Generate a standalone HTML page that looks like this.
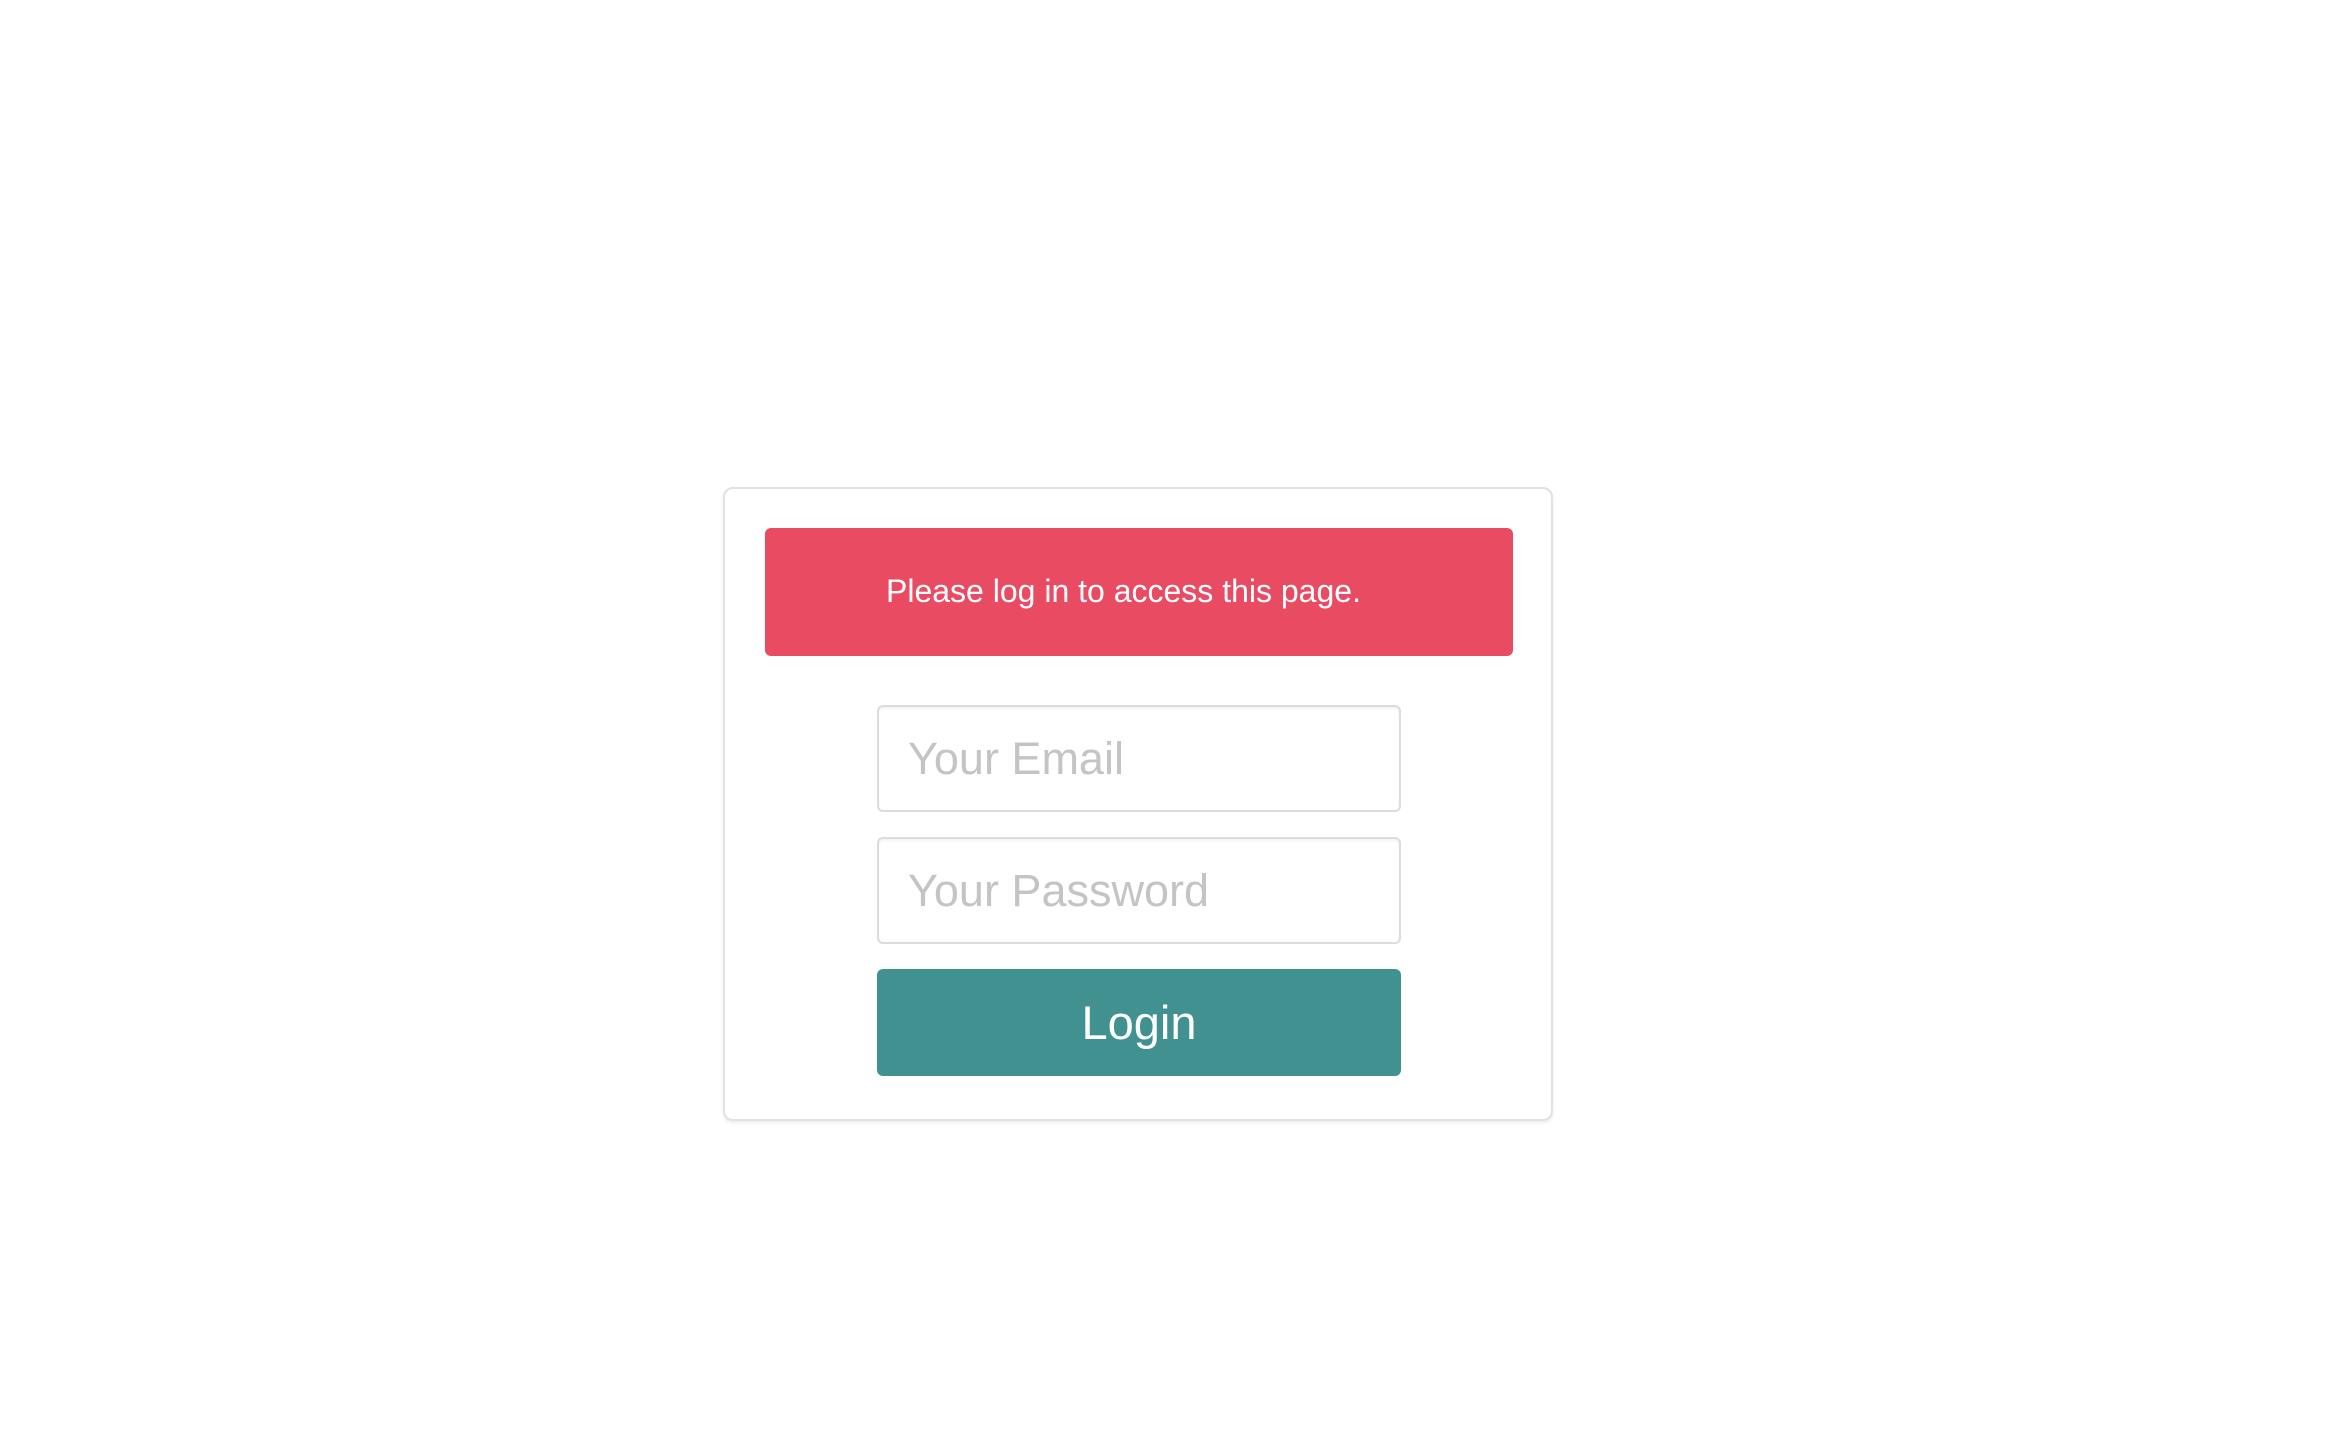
<!DOCTYPE html>
<html><head><meta charset="utf-8"><style>
html,body{margin:0;padding:0;background:#fff;width:2346px;height:1456px;overflow:hidden;font-family:"Liberation Sans",Arial,sans-serif}
.card{position:absolute;left:723px;top:487px;width:826px;height:630px;border:2px solid #e2e2e2;border-radius:10px;box-shadow:0 2px 3px rgba(0,0,0,.08);background:#fff}
.alert{position:absolute;left:765px;top:528px;width:748px;height:128px;background:#e94b63;border-radius:6px}
.alert span{position:absolute;left:121px;top:0;line-height:126px;font-size:32px;color:#fff;white-space:nowrap}
.inp{position:absolute;left:877px;width:520px;height:103px;border:2px solid #dcdcdc;border-radius:6px;box-shadow:inset 0 2px 2px rgba(0,0,0,.05);background:#fff}
.inp span{position:absolute;left:29px;top:0;line-height:103px;font-size:45px;color:#c4c4c4;white-space:nowrap}
.btn{position:absolute;left:877px;top:969px;width:524px;height:107px;background:#419191;border-radius:6px;color:#fff;font-size:47px;text-align:center;line-height:107px}
</style></head><body>
<div class="card"></div>
<div class="alert"><span>Please log in to access this page.</span></div>
<div class="inp" style="top:705px"><span>Your Email</span></div>
<div class="inp" style="top:837px"><span>Your Password</span></div>
<div class="btn">Login</div>
</body></html>
